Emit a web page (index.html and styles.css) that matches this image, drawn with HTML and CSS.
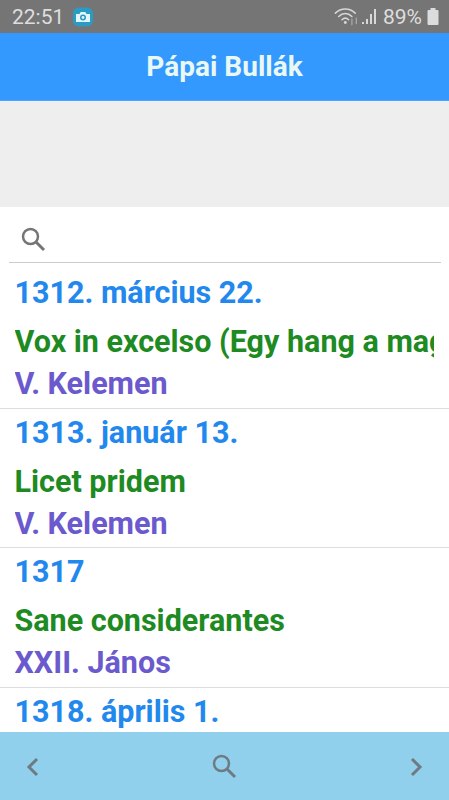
FILE: index.html
```html
<!DOCTYPE html>
<html lang="hu">
<head>
  <meta charset="UTF-8">
  <meta name="viewport" content="width=device-width, initial-scale=1">
  <title>Pápai Bullák</title>
  <link rel="stylesheet" href="styles.css">
</head>
<body>
  <div class="statusbar">
    <span class="time">22:51</span>
    <svg class="cam" width="22" height="20" viewBox="0 0 22 20">
      <rect x="1" y="0.500" width="20" height="19" rx="6" fill="#2a9cc4"/>
      <path d="M4 7h3.5l1.2-2h4.6l1.2 2H18v8H4z" fill="#e4f6fb"/>
      <circle cx="11" cy="10.5" r="3" fill="#2a9cc4"/>
      <circle cx="11" cy="10.5" r="1.4" fill="#e4f6fb"/>
    </svg>
    <span class="spacer"></span>
    <svg class="wifi" width="27" height="22" viewBox="0 0 24 20" fill="none" stroke="#d8d8d8" stroke-linecap="round">
      <path d="M1 6.5C6 1.500 14 1.500 19 6.500" stroke-width="1.400"/>
      <path d="M4 9.500C7.500 6 12.500 6 16 9.500" stroke-width="1.400"/>
      <path d="M7 12.500C9 10.500 11 10.500 13 12.500" stroke-width="1.400"/>
      <circle cx="10" cy="15" r="1.300" fill="#d8d8d8" stroke="none"/>
      <path d="M16 12v5M20 11v5" stroke="#a8a8a8" stroke-width="1.200"/>
    </svg>
    <svg class="signal" width="16" height="18" viewBox="0 0 16 18" fill="#d8d8d8">
      <rect x="1" y="14" width="2" height="2"/>
      <rect x="5" y="11" width="2" height="5"/>
      <rect x="9" y="6" width="2" height="10"/>
      <rect x="13" y="1" width="2" height="15"/>
    </svg>
    <span class="battery-pct">89%</span>
    <svg class="battery" width="12" height="18" viewBox="0 0 12 18" fill="#dcdcdc">
      <rect x="3.500" y="0" width="5" height="3"/>
      <rect x="0.500" y="2" width="11" height="15" rx="1"/>
    </svg>
  </div>

  <header class="appbar">Pápai Bullák</header>
  <div class="adspace"></div>

  <div class="searchbox">
    <svg class="icon" width="30" height="30" viewBox="0 0 30 30" fill="none" stroke="#757575">
      <circle cx="11.500" cy="11.500" r="7.500" stroke-width="2.500"/>
      <path d="M17 17l8 8" stroke-width="3"/>
    </svg>
  </div>

  <div class="list">
    <div class="item">
      <div class="date">1312. március 22.</div>
      <div class="title">Vox in excelso (Egy hang a magasból)</div>
      <div class="pope">V. Kelemen</div>
    </div>
    <div class="item">
      <div class="date">1313. január 13.</div>
      <div class="title">Licet pridem</div>
      <div class="pope">V. Kelemen</div>
    </div>
    <div class="item">
      <div class="date">1317</div>
      <div class="title">Sane considerantes</div>
      <div class="pope">XXII. János</div>
    </div>
    <div class="item">
      <div class="date">1318. április 1.</div>
    </div>
  </div>

  <div class="bottombar">
    <svg width="20" height="24" viewBox="0 0 20 24" fill="none" stroke="#6f7b82" stroke-width="3"><path d="M14 4l-8 8 8 8"/></svg>
    <svg width="30" height="30" viewBox="0 0 30 30" fill="none" stroke="#6f7b82">
      <circle cx="11.500" cy="11.500" r="7.500" stroke-width="2.500"/>
      <path d="M17 17l8 8" stroke-width="3"/>
    </svg>
    <svg width="20" height="24" viewBox="0 0 20 24" fill="none" stroke="#6f7b82" stroke-width="3"><path d="M6 4l8 8-8 8"/></svg>
  </div>
</body>
</html>
```

FILE: styles.css
```css
body {
  font-family: Roboto, sans-serif;
  background: white;
  margin: 0;
  padding: 0;
  height: 800px;
  overflow: hidden;
  display: flex;
  flex-direction: column;
}
.statusbar {
  height: 33px;
  flex: none;
  background: #757575;
  color: #dedede;
  display: flex;
  align-items: center;
  padding: 0 10px 0 12px;
  font-size: 21px;
}
.cam {
  margin-left: 8px;
}
.spacer {
  flex: 1;
}
.battery-pct {
  margin: 0 5px 0 6px;
}
.appbar {
  height: 68px;
  flex: none;
  background: #3399ff;
  border-bottom: 1px solid #4aa6ff;
  box-sizing: border-box;
  color: #eaf8f4;
  font-size: 28px;
  font-weight: 700;
  display: flex;
  align-items: center;
  justify-content: center;
}
.adspace {
  height: 106px;
  flex: none;
  background: #eeeeee;
}
.searchbox {
  height: 56px;
  flex: none;
  box-sizing: border-box;
  margin: 0 8px 0 9px;
  border-bottom: 1px solid #cccccc;
  display: flex;
  align-items: center;
  padding: 11px 0 0 10px;
}
.list {
  flex: 1;
  min-height: 0;
  overflow: hidden;
  padding-top: 6px;
}
.item {
  height: 139.500px;
  box-sizing: border-box;
  border-bottom: 1px solid #dddddd;
  padding: 3px 15px 0 14.500px;
}
.date, .title, .pope {
  font-size: 30.500px;
  font-weight: 700;
  height: 42px;
  line-height: 42px;
  white-space: nowrap;
  overflow: hidden;
}
.date {
  color: #2288ee;
}
.title {
  color: #1e8a22;
  margin-top: 6px;
  height: 43px;
  line-height: 43px;
}
.pope {
  color: #6a5acd;
}
.bottombar {
  height: 68px;
  flex: none;
  box-sizing: border-box;
  background: #90d0ec;
  display: flex;
  align-items: center;
  justify-content: space-between;
  padding: 2px 23px 0;
}
```
